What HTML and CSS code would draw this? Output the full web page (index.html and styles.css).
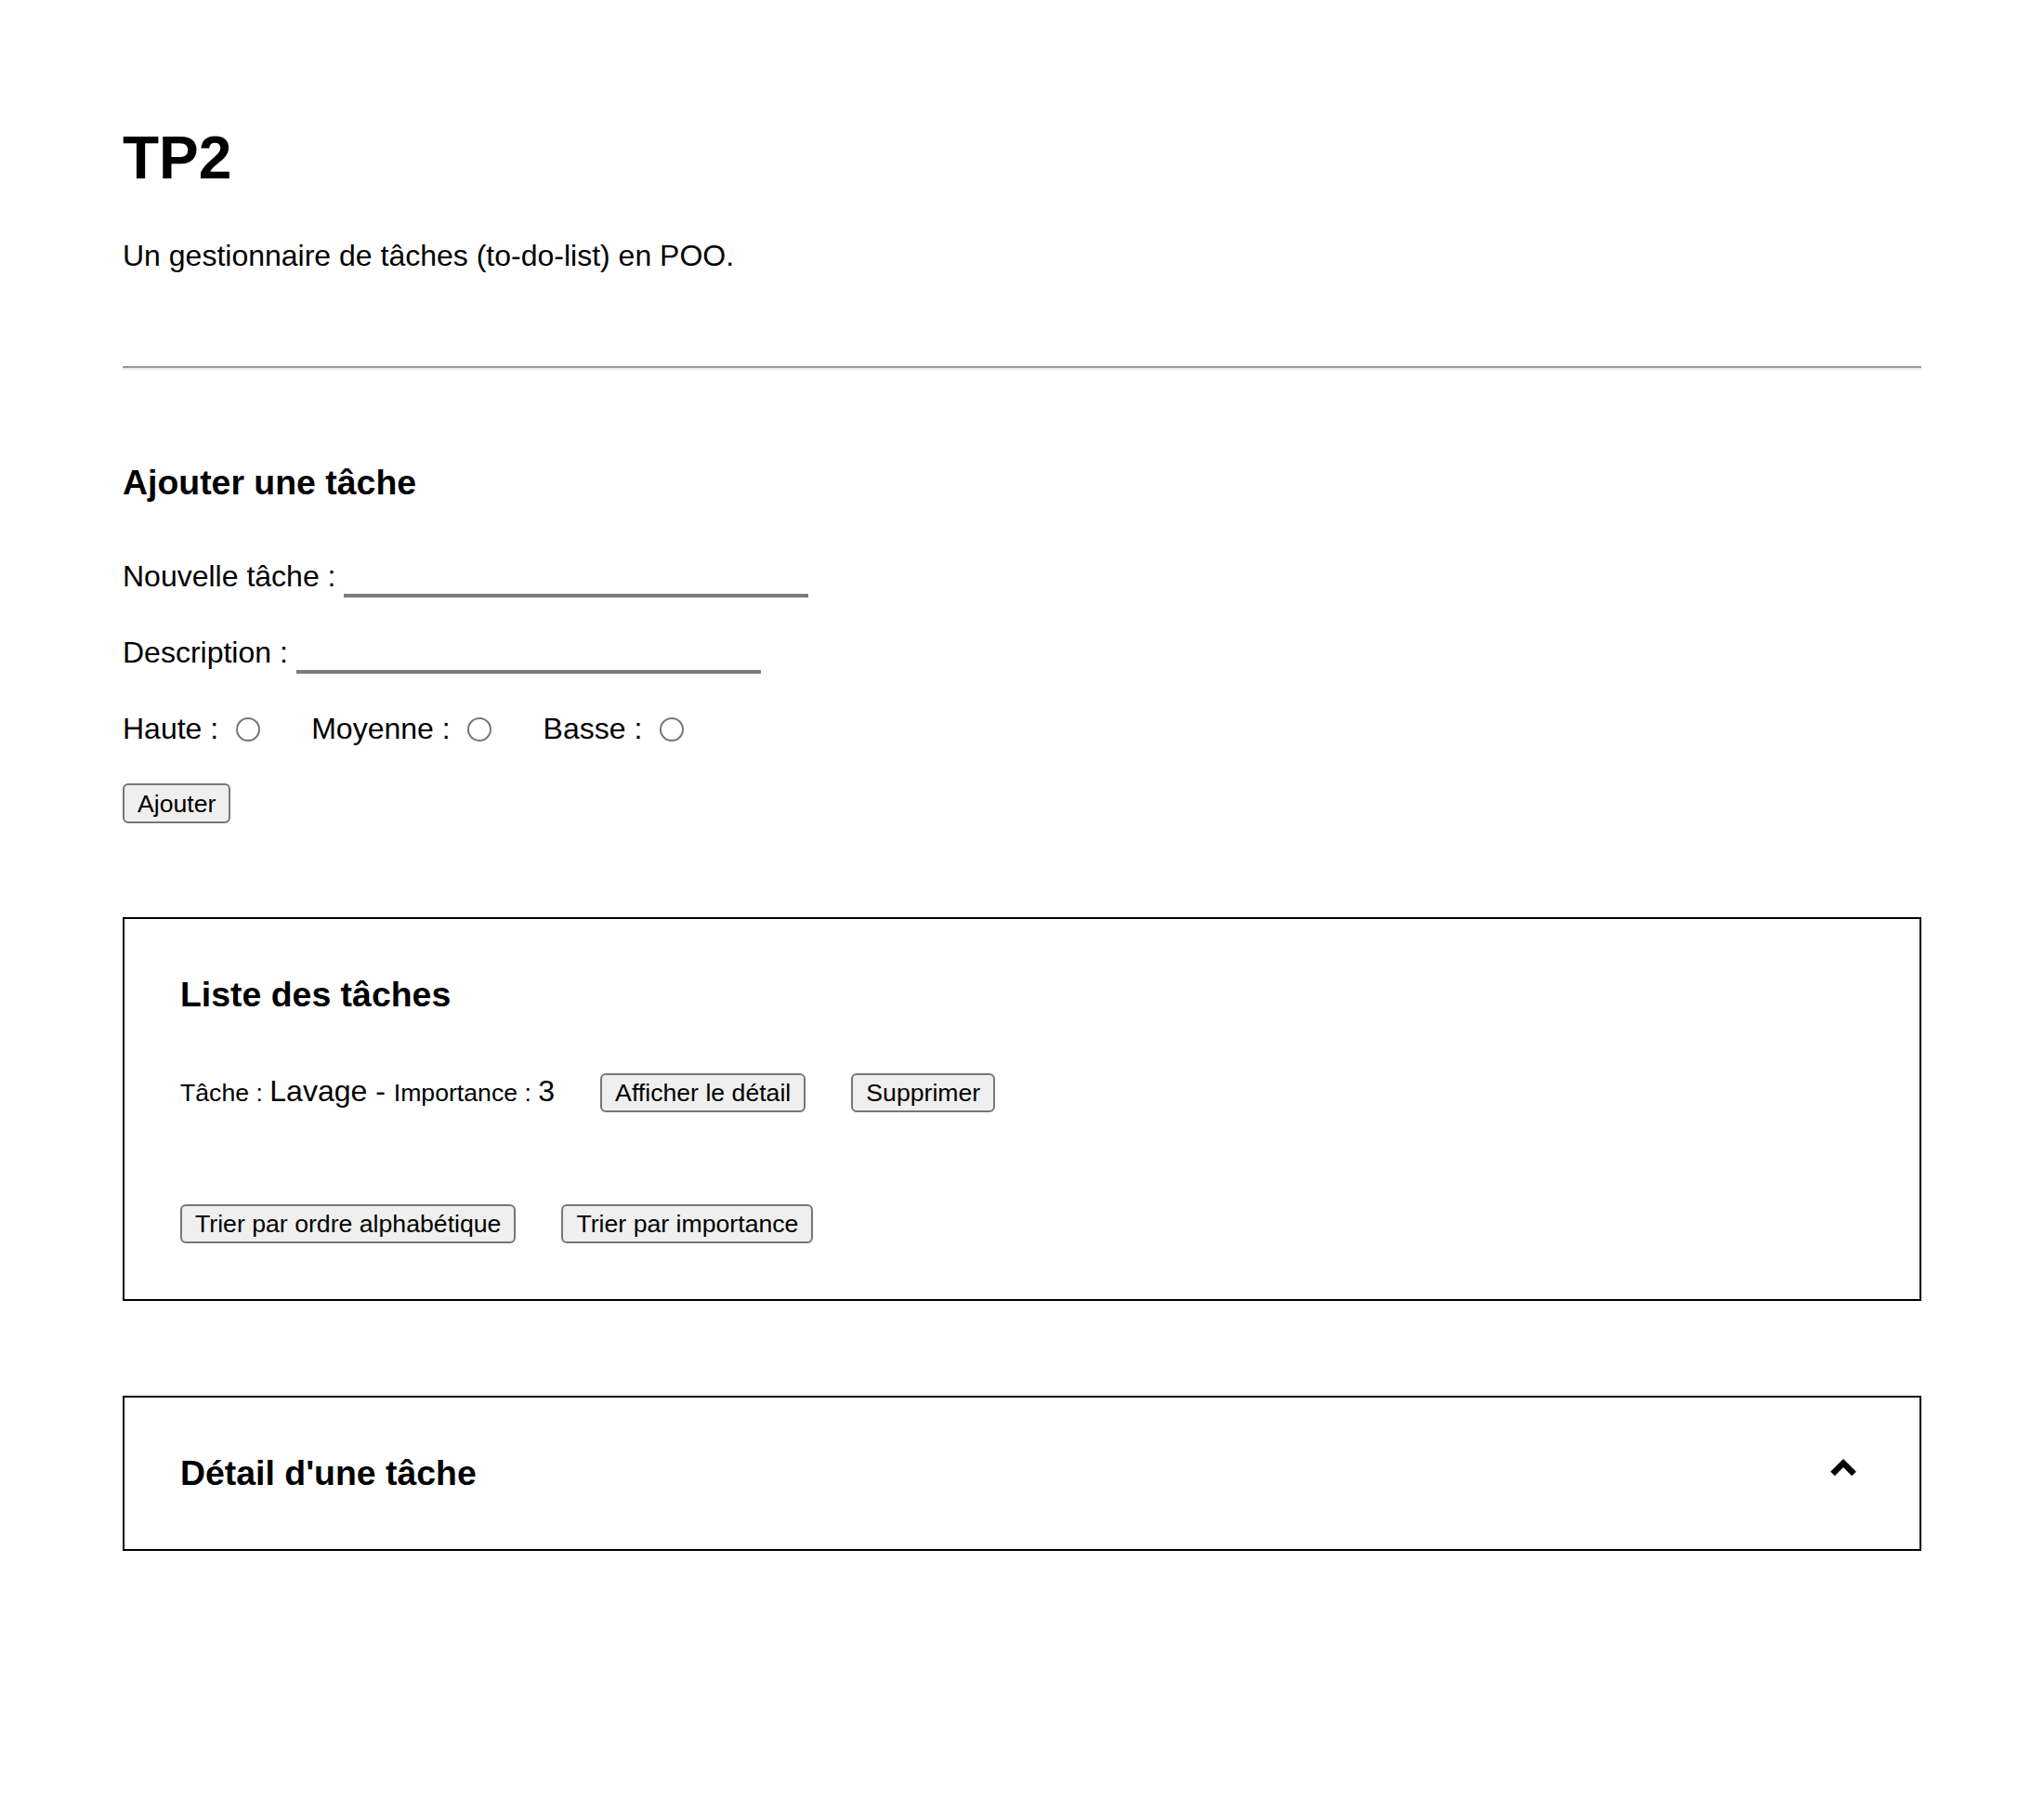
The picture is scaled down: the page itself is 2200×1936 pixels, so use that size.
FILE: index.html
```html
<!DOCTYPE html>
<html lang="fr">
<head>
<meta charset="utf-8">
<title>TP2</title>
<link rel="stylesheet" href="styles.css">
</head>
<body>
<div class="page">
  <h1 class="title">TP2</h1>
  <p class="intro">Un gestionnaire de tâches (to-do-list) en POO.</p>
  <hr class="sep">

  <section class="add">
    <h3 class="heading">Ajouter une tâche</h3>
    <div class="field field-first">
      <label class="field-label" for="nom">Nouvelle tâche :&nbsp;</label>
      <input class="text-input" id="nom" type="text">
    </div>
    <div class="field">
      <label class="field-label" for="desc">Description :&nbsp;</label>
      <input class="text-input" id="desc" type="text">
    </div>
    <div class="radios">
      <label class="radio-group">Haute :<input class="radio" type="radio" name="imp"></label>
      <label class="radio-group">Moyenne :<input class="radio" type="radio" name="imp"></label>
      <label class="radio-group">Basse :<input class="radio" type="radio" name="imp"></label>
    </div>
    <button class="btn btn-add" type="button">Ajouter</button>
  </section>

  <section class="box list-box">
    <h3 class="heading box-heading">Liste des tâches</h3>
    <div class="task-row">
      <span class="task-info"><span class="small">Tâche :&nbsp;</span>Lavage -&nbsp;<span class="small">Importance :&nbsp;</span>3</span>
      <button class="btn" type="button">Afficher le détail</button>
      <button class="btn" type="button">Supprimer</button>
    </div>
    <div class="sort-row">
      <button class="btn" type="button">Trier par ordre alphabétique</button>
      <button class="btn" type="button">Trier par importance</button>
    </div>
  </section>

  <section class="box detail-box">
    <div class="detail-head">
      <h3 class="heading box-heading">Détail d'une tâche</h3>
      <span class="chevron">
        <svg width="32" height="22" viewBox="0 0 32 22" aria-hidden="true">
          <polyline points="4.5,18 16,6.5 27.5,18" fill="none" stroke="#000" stroke-width="6.5" stroke-linejoin="miter" stroke-linecap="butt"/>
        </svg>
      </span>
    </div>
  </section>
</div>
</body>
</html>
```

FILE: styles.css
```css
html, body {
  margin: 0;
  padding: 0;
  background: #fff;
}

body {
  font-family: "Liberation Sans", Arial, Helvetica, sans-serif;
  font-size: 32px;
  color: #000;
}

.page {
  padding: 0 132px 120px;
}

.title {
  font-size: 64px;
  font-weight: bold;
  margin: 133px 0 0;
  line-height: normal;
}

.intro {
  margin: 50px 0 0;
  line-height: normal;
}

.sep {
  margin: 100px 0 0;
  height: 0;
  border: 0;
  border-top: 2px solid #9a9a9a;
  border-bottom: 2px solid #ececec;
}

.heading {
  font-size: 37.44px;
  font-weight: bold;
  line-height: normal;
  margin: 0;
}

.add .heading {
  margin-top: 99.5px;
}

.field {
  display: flex;
  align-items: flex-end;
  margin-top: 41px;
}

.field-first {
  margin-top: 61px;
}

.field-label {
  line-height: 37px;
  margin-bottom: 4px;
}

.text-input {
  appearance: none;
  -webkit-appearance: none;
  box-sizing: border-box;
  width: 500px;
  height: 41px;
  margin: 0;
  padding: 0 4px;
  border: 0;
  border-bottom: 4px solid #7b7b7b;
  background: transparent;
  font-family: inherit;
  font-size: 26.67px;
  outline: none;
}

.radios {
  display: flex;
  align-items: center;
  gap: 55.5px;
  margin-top: 41.5px;
  line-height: 37px;
}

.radio-group {
  display: flex;
  align-items: center;
}

.radio {
  appearance: none;
  -webkit-appearance: none;
  box-sizing: border-box;
  width: 26px;
  height: 26px;
  margin: 0 0 0 18.5px;
  border: 2px solid #767676;
  border-radius: 50%;
  background: #fff;
}

.btn {
  box-sizing: border-box;
  height: 42px;
  margin: 0;
  padding: 4px 14px;
  border: 2px solid #767676;
  border-radius: 6px;
  background: #efefef;
  color: #000;
  font-family: "Liberation Sans", Arial, Helvetica, sans-serif;
  font-size: 26.67px;
  line-height: 30px;
}

.btn-add {
  display: block;
  margin-top: 40px;
  height: 43px;
}

.box {
  border: 2px solid #000;
  padding: 60px;
}

.list-box {
  margin-top: 101px;
}

.task-row {
  display: flex;
  align-items: baseline;
  gap: 49px;
  margin-top: 62.5px;
}

.task-info {
  line-height: normal;
  white-space: nowrap;
}

.small {
  font-size: 26.67px;
}

.sort-row {
  display: flex;
  gap: 49px;
  margin-top: 99.5px;
}

.detail-box {
  margin-top: 101.5px;
}

.detail-head {
  display: flex;
  justify-content: space-between;
  align-items: flex-start;
}

.chevron {
  display: block;
  margin: 4px 6px 0 0;
  line-height: 0;
}
```
